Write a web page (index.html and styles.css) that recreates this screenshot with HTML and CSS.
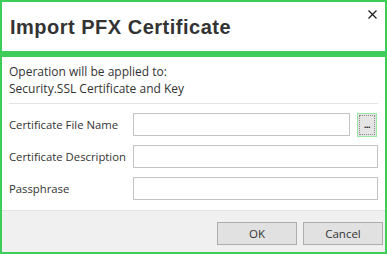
FILE: index.html
```html
<!DOCTYPE html>
<html lang="en">
<head>
    <meta charset="UTF-8">
    <title>Import PFX Certificate</title>
    <link rel="stylesheet" href="styles.css">
</head>
<body>
    <div class="dialog">
        <div class="header">
            <h1 class="title">Import PFX Certificate</h1>
            <button class="close" aria-label="Close">
                <svg width="9" height="9" viewBox="0 0 9 9">
                    <path d="M0.5 0.5 L8.5 8.5 M8.5 0.5 L0.5 8.5" stroke="#222" stroke-width="1.3" fill="none"/>
                </svg>
            </button>
        </div>
        <div class="accent"></div>
        <div class="content">
            <div class="info">
                <div>Operation will be applied to:</div>
                <div>Security.SSL Certificate and Key</div>
            </div>
            <div class="separator"></div>
            <div class="form">
                <div class="form-row">
                    <label for="fileName">Certificate File Name</label>
                    <input type="text" id="fileName" class="field">
                    <button class="browse"><span>...</span></button>
                </div>
                <div class="form-row">
                    <label for="description">Certificate Description</label>
                    <input type="text" id="description" class="field">
                </div>
                <div class="form-row">
                    <label for="passphrase">Passphrase</label>
                    <input type="password" id="passphrase" class="field">
                </div>
            </div>
        </div>
        <div class="footer">
            <button class="btn">OK</button>
            <button class="btn">Cancel</button>
        </div>
    </div>
</body>
</html>
```

FILE: styles.css
```css
/* dialog */
body {
    margin: 0;
    padding: 0;
    background-color: #fff;
    font-family: "Open Sans", "Noto Sans", sans-serif;
    font-size: 11.3px;
    color: #333;
}
.dialog {
    width: 383px;
    height: 250px;
    border: 2px solid #3ecd58;
    display: flex;
    flex-direction: column;
    background-color: #fff;
}
.header {
    height: 49px;
    display: flex;
    justify-content: space-between;
    align-items: flex-start;
    padding: 0 8px 0 8px;
}
.title {
    margin: 14px 0 0 0;
    font-family: "Liberation Sans", Arial, sans-serif;
    font-weight: bold;
    font-size: 20px;
    line-height: 22px;
    letter-spacing: 0.5px;
    color: #333;
}
.close {
    margin-top: 8px;
    padding: 0;
    border: none;
    background: none;
    width: 9px;
    height: 9px;
    display: flex;
}
.accent {
    height: 6px;
    background-color: #3ecd58;
}
.content {
    flex: 1;
    padding: 7px 7px 0 7px;
}
.info {
    font-size: 12px;
    line-height: 16.5px;
    margin-bottom: 6px;
}
.separator {
    height: 1px;
    background-color: #e3e3e3;
    margin-bottom: 9px;
}
.form {
    display: flex;
    flex-direction: column;
    gap: 9px;
}
.form-row {
    display: flex;
    align-items: center;
    height: 23px;
}
.form-row label {
    width: 124px;
    flex-shrink: 0;
}
.field {
    flex: 1;
    height: 23px;
    box-sizing: border-box;
    border: 1px solid #c3c3c3;
    padding: 0 4px;
    margin: 0;
    outline: none;
}
.browse {
    width: 20px;
    height: 24px;
    margin-left: 7px;
    margin-right: 1px;
    padding: 1px;
    box-sizing: border-box;
    border: 1px solid #9be7a4;
    background-color: #e5e5e5;
    display: flex;
}
.browse span {
    flex: 1;
    border: 1px dotted #888;
    font-size: 9px;
    font-weight: bold;
    line-height: 1;
    color: #111;
    display: flex;
    align-items: flex-end;
    justify-content: center;
    padding-bottom: 4px;
    letter-spacing: -0.5px;
}
.footer {
    height: 42px;
    border-top: 1px solid #e2e2e2;
    background-color: #f0f0f0;
    display: flex;
    justify-content: flex-end;
    align-items: flex-start;
    gap: 6px;
    padding: 11px 2px 0 0;
    box-sizing: border-box;
}
.btn {
    width: 80px;
    height: 23px;
    border: 1px solid #adadad;
    background-color: #e1e1e1;
    font-family: "Open Sans", "Noto Sans", sans-serif;
    font-size: 11.5px;
    color: #333;
    padding: 0;
}
```
